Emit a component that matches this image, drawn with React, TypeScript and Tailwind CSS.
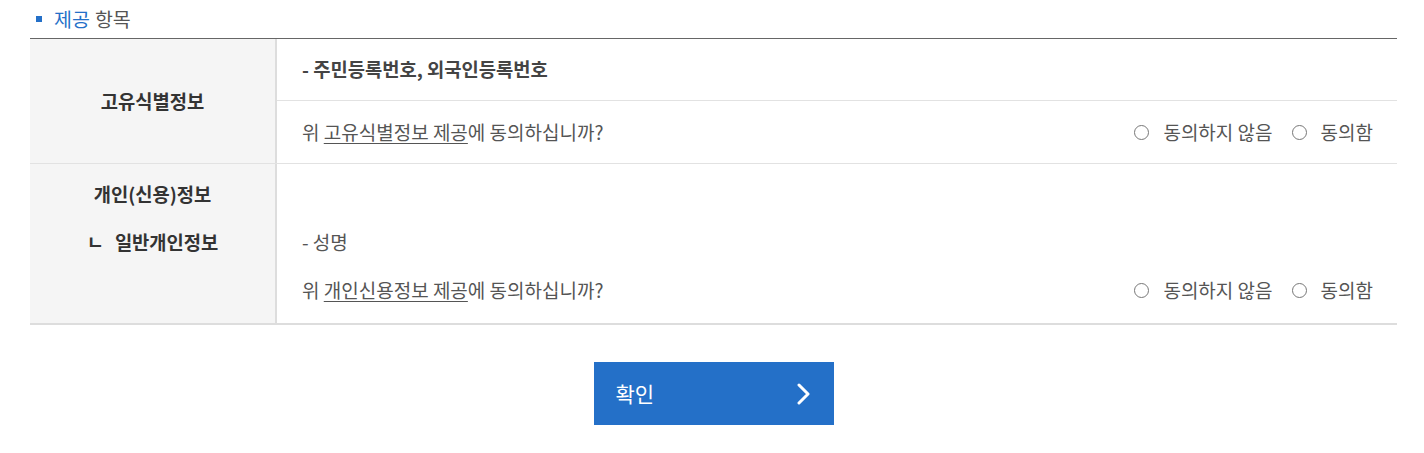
import React from "react";

const font = { fontFamily: '"Noto Sans CJK KR", "Noto Sans", sans-serif' };

function Radio({ label }: { label: string }) {
  return (
    <label className="flex items-center">
      <span className="w-[15px] h-[15px] rounded-full border border-[#777] bg-white" />
      <span className="ml-[14px]">{label}</span>
    </label>
  );
}

function Agree() {
  return (
    <div className="flex items-center gap-[19px]">
      <Radio label="동의하지 않음" />
      <Radio label="동의함" />
    </div>
  );
}

export default function App() {
  return (
    <div className="w-[1424px] h-[453px] bg-white text-[19px] text-[#555]" style={font}>
      <div className="pl-[30px] pt-[5px] w-[1397px]">
        <div className="flex items-center h-[28px] pl-[6px]">
          <span className="w-[6px] h-[6px] bg-[#2470c8]" />
          <span className="ml-[12px] text-[19.5px] text-[#2470c8]">제공</span>
          <span className="ml-[5px] text-[19.5px] text-[#555]">항목</span>
        </div>
        <div className="mt-[5px] border-t border-[#666] border-b-2 border-b-[#ddd]">
          {/* Row 1 */}
          <div className="flex border-b border-[#e2e2e2]">
            <div className="w-[247px] shrink-0 bg-[#f5f5f5] border-r-2 border-[#ddd] flex items-center justify-center font-bold text-[#333] text-[18.75px]">
              고유식별정보
            </div>
            <div className="flex-1">
              <div className="h-[62px] flex items-center pl-[25px] border-b border-[#e2e2e2] font-bold text-[#444] text-[18.75px]">
                - 주민등록번호, 외국인등록번호
              </div>
              <div className="h-[62px] flex items-center justify-between pl-[25px] pr-[24px]">
                <div>
                  위 <span className="underline underline-offset-[3px] decoration-[#555]">고유식별정보 제공</span>에 동의하십니까?
                </div>
                <Agree />
              </div>
            </div>
          </div>
          {/* Row 2 */}
          <div className="flex">
            <div className="w-[247px] shrink-0 bg-[#f5f5f5] border-r-2 border-[#ddd] pt-[6px] pb-[9px] flex flex-col items-center font-bold text-[#333] text-[18.75px]">
              <div className="h-[48px] flex items-center">개인(신용)정보</div>
              <div className="h-[48px] flex items-center">
                <span className="mr-[11px]">ㄴ</span>일반개인정보
              </div>
              <div className="h-[48px]" />
            </div>
            <div className="flex-1 pt-[6px] pb-[9px]">
              <div className="h-[48px]" />
              <div className="h-[48px] flex items-center pl-[25px]">- 성명</div>
              <div className="h-[48px] flex items-center justify-between pl-[25px] pr-[24px]">
                <div>
                  위 <span className="underline underline-offset-[3px] decoration-[#555]">개인신용정보 제공</span>에 동의하십니까?
                </div>
                <Agree />
              </div>
            </div>
          </div>
        </div>
        <div className="flex justify-center mt-[37px]">
          <button className="w-[240px] h-[63px] bg-[#2470c8] text-white text-[21px] flex items-center justify-between pl-[22px] pr-[22px]">
            <span>확인</span>
            <svg width="16" height="22" viewBox="0 0 16 22" fill="none">
              <path d="M3 2 L12 11 L3 20" stroke="white" strokeWidth="3" strokeLinecap="round" strokeLinejoin="round" />
            </svg>
          </button>
        </div>
      </div>
    </div>
  );
}
